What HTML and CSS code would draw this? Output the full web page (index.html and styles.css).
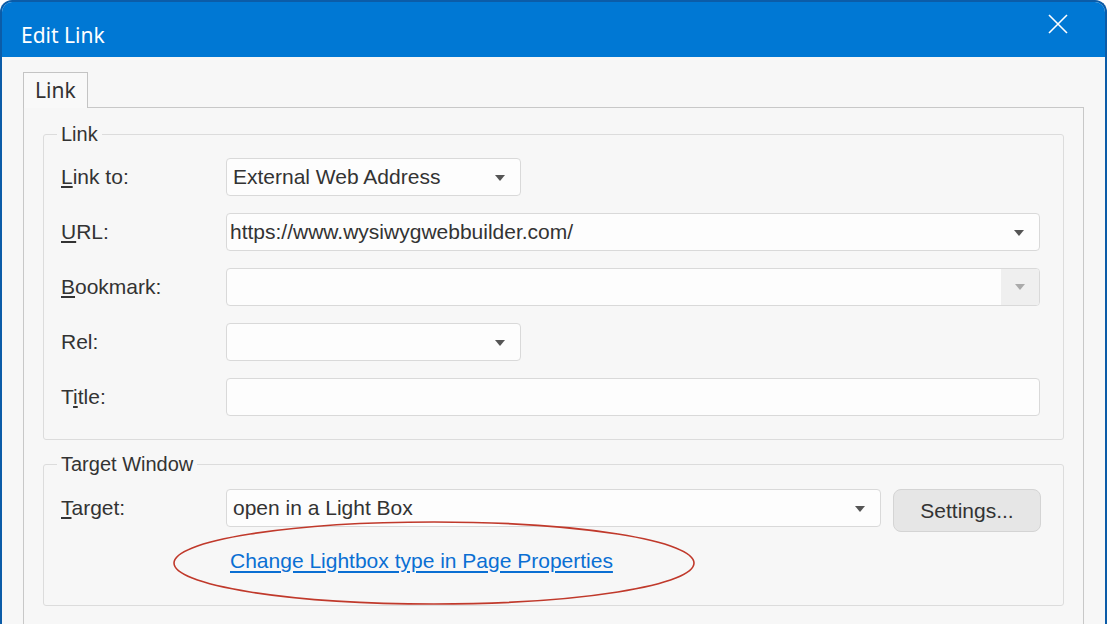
FILE: index.html
```html
<!DOCTYPE html>
<html lang="en">
<head>
    <meta charset="UTF-8">
    <title>Edit Link</title>
    <link rel="stylesheet" href="styles.css">
</head>
<body>
    <div class="window">
        <div class="titlebar">
            <span class="title">Edit Link</span>
            <svg class="close" width="22" height="22" viewBox="0 0 22 22">
                <path d="M2 2 L20 20 M20 2 L2 20" stroke="#fff" stroke-width="1.6" fill="none"/>
            </svg>
        </div>

        <div class="content">
            <div class="tabs">
                <div class="tab">Link</div>
            </div>
            <div class="panel">
                <fieldset class="group">
                    <legend>Link</legend>
                    <div class="rows">
                        <div class="row">
                            <label class="lbl"><u>L</u>ink to:</label>
                            <div class="combo short">External Web Address<span class="arrow"></span></div>
                        </div>
                        <div class="row">
                            <label class="lbl"><u>U</u>RL:</label>
                            <div class="combo wide edit">https://www.wysiwygwebbuilder.com/<span class="arrow"></span></div>
                        </div>
                        <div class="row">
                            <label class="lbl"><u>B</u>ookmark:</label>
                            <div class="combo wide disabled"><span class="drop"><span class="arrow light"></span></span></div>
                        </div>
                        <div class="row">
                            <label class="lbl">Rel:</label>
                            <div class="combo short"><span class="arrow"></span></div>
                        </div>
                        <div class="row">
                            <label class="lbl">T<u>i</u>tle:</label>
                            <div class="combo wide"></div>
                        </div>
                    </div>
                </fieldset>

                <fieldset class="group target">
                    <legend>Target Window</legend>
                    <div class="row top">
                        <label class="lbl"><u>T</u>arget:</label>
                        <div class="combo mid">open in a Light Box<span class="arrow"></span></div>
                        <button class="btn">Settings...</button>
                    </div>
                    <div class="linkrow">
                        <a href="#" class="pagelink">Change Lightbox type in Page Properties</a>
                        <svg class="mark" width="526" height="88" viewBox="0 0 526 88">
                            <ellipse cx="263" cy="44" rx="260" ry="41" fill="none" stroke="#c0392b" stroke-width="1.6"/>
                        </svg>
                    </div>
                </fieldset>
            </div>
        </div>
    </div>
</body>
</html>
```

FILE: styles.css
```css
body {
    margin: 0;
    background: #fff;
    font-family: "Liberation Sans", Arial, sans-serif;
    overflow: hidden;
}

.window {
    width: 1107px;
    height: 640px;
    box-sizing: border-box;
    border: 2px solid #0b5ca8;
    border-bottom: none;
    border-radius: 12px 12px 0 0;
    background: #f7f7f7;
    overflow: hidden;
}

.titlebar {
    height: 55px;
    background: #0078d4;
    display: flex;
    justify-content: space-between;
    align-items: flex-start;
    padding: 0 36px 0 19px;
}

.title {
    font-family: "Noto Sans", "Open Sans", sans-serif;
    font-size: 21px;
    color: #fff;
    margin-top: 19px;
    line-height: 28px;
}

.close {
    margin-top: 11px;
}

.content {
    padding: 15px 0 0 21px;
}

.tabs {
    display: flex;
}

.tab {
    font-family: "Noto Sans", "Open Sans", sans-serif;
    font-size: 21px;
    color: #333;
    line-height: 34px;
    padding: 0 11px 1px;
    border: 1px solid #c4c4c4;
    border-bottom: none;
    background: #f9f9f9;
    margin-bottom: -1px;
    position: relative;
    z-index: 1;
}

.panel {
    height: 560px;
    border: 1px solid #c8c8c8;
    border-bottom: none;
    padding: 14px 19px 0;
    box-sizing: border-box;
    width: 1061px;
}

.group {
    margin: 0;
    border: 1px solid #dcdcdc;
    border-radius: 3px;
    padding: 12px 22px 23px 17px;
}

.group legend {
    font-size: 20px;
    line-height: 24px;
    color: #333;
    padding: 0 4px;
    margin-left: -4px;
}

.group.target {
    margin-top: 12px;
    padding-top: 13px;
    padding-bottom: 30px;
}

.rows {
    display: flex;
    flex-direction: column;
    gap: 17px;
}

.row {
    display: flex;
    align-items: center;
}

.row.top {
    align-items: flex-start;
}

.lbl {
    width: 165px;
    flex: none;
    font-size: 21px;
    color: #333;
    line-height: 38px;
}

.combo {
    position: relative;
    height: 38px;
    box-sizing: border-box;
    border: 1px solid #d9d9d9;
    border-radius: 4px;
    background: #fdfdfd;
    font-size: 21px;
    color: #333;
    line-height: 36px;
    padding-left: 6px;
    white-space: nowrap;
    overflow: hidden;
}

.combo.short {
    width: 295px;
}

.combo.wide {
    width: 814px;
}

.combo.mid {
    width: 655px;
}

.combo.edit {
    padding-left: 3px;
}

.arrow {
    position: absolute;
    right: 15px;
    top: 16px;
    width: 0;
    height: 0;
    border-left: 5px solid transparent;
    border-right: 5px solid transparent;
    border-top: 6px solid #555;
}

.arrow.light {
    border-top-color: #aaa;
    right: 14px;
    top: 15px;
}

.combo.disabled .drop {
    position: absolute;
    right: 0;
    top: 0;
    bottom: 0;
    width: 38px;
    background: #efefef;
}

.btn {
    margin-left: 12px;
    width: 148px;
    height: 43px;
    border: 1px solid #d4d4d4;
    border-radius: 8px;
    background: #e6e6e6;
    font-family: "Liberation Sans", Arial, sans-serif;
    font-size: 21px;
    color: #333;
    padding: 0;
}

.linkrow {
    position: relative;
    padding: 17px 0 0 169px;
    line-height: 24px;
}

.pagelink {
    font-size: 21px;
    color: #0a6fd3;
    text-decoration: underline;
    text-underline-offset: 3px;
}

.mark {
    position: absolute;
    left: 110px;
    top: -13px;
    pointer-events: none;
}
```
